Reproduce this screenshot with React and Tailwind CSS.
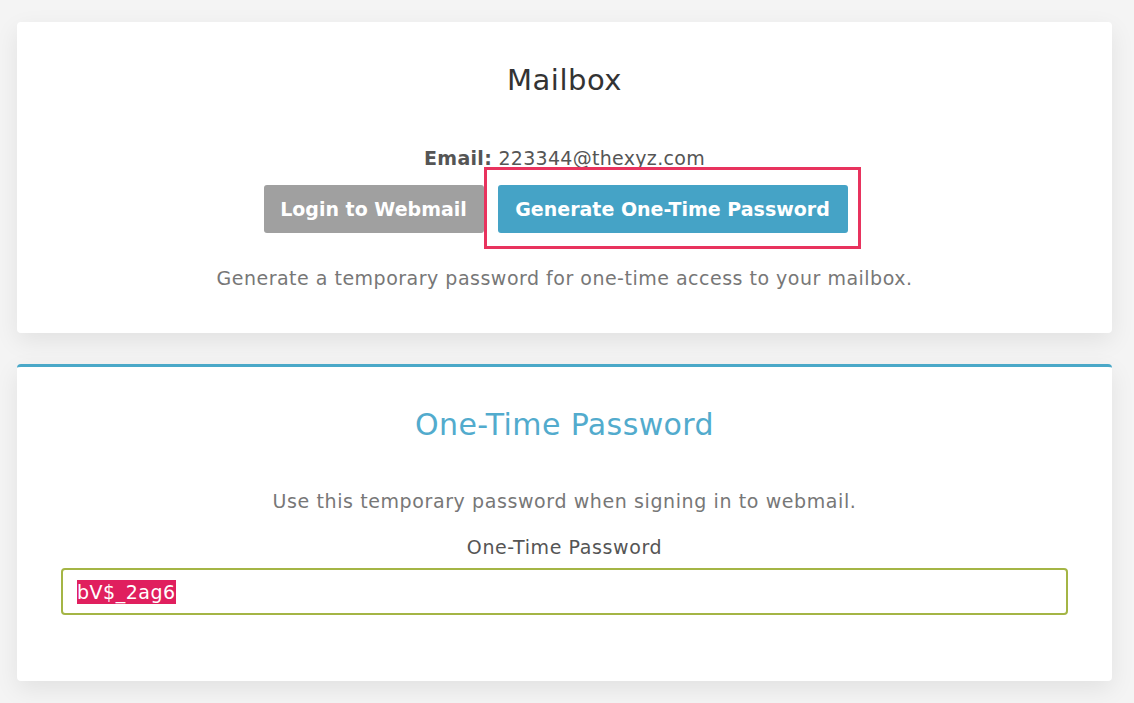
import React from 'react';

export default function App() {
  return (
    <div
      className="min-h-screen w-full bg-[#f4f4f4] pt-[22px] pb-[22px]"
      style={{ fontFamily: '"DejaVu Sans", Inter, sans-serif' }}
    >
      {/* Mailbox card */}
      <div className="ml-[17px] w-[1095px] h-[311px] bg-white rounded-[4px] shadow-[0_8px_24px_rgba(0,0,0,0.08)] flex flex-col items-center">
        <h2 className="mt-[42px] text-[29px] leading-[32px] tracking-[0.5px] text-[#333] font-normal">Mailbox</h2>
        <p className="mt-[51px] text-[19px] leading-[22px] tracking-[0.3px] text-[#555]">
          <span className="font-bold">Email:</span> 223344@thexyz.com
        </p>
        <div className="mt-[16px] mr-[18px] flex items-center">
          <button className="h-[48px] w-[220px] bg-[#a0a0a0] rounded-[3px] text-white font-bold text-[19px]">
            Login to Webmail
          </button>
          <div className="relative ml-[14px]">
            <button className="h-[48px] w-[350px] bg-[#45a3c6] rounded-[3px] text-white font-bold text-[19px]">
              Generate One-Time Password
            </button>
            <div className="absolute left-[-14px] top-[-18px] right-[-13px] bottom-[-16px] border-[3px] border-[#e8335e] pointer-events-none" />
          </div>
        </div>
        <p className="mt-[34px] text-[19px] leading-[22px] tracking-[0.5px] text-[#777]">
          Generate a temporary password for one-time access to your mailbox.
        </p>
      </div>

      {/* One-Time Password card */}
      <div className="mt-[31px] ml-[17px] w-[1095px] h-[317px] bg-white border-t-[3px] border-[#4aa8c8] rounded-[4px] shadow-[0_8px_24px_rgba(0,0,0,0.08)] flex flex-col items-center">
        <h2 className="mt-[41px] text-[30px] leading-[34px] tracking-[0.4px] text-[#52abcd] font-normal">One-Time Password</h2>
        <p className="mt-[48px] text-[19px] leading-[22px] tracking-[0.6px] text-[#777]">
          Use this temporary password when signing in to webmail.
        </p>
        <p className="mt-[24px] text-[19px] leading-[22px] tracking-[0.6px] text-[#555]">One-Time Password</p>
        <div className="mt-[10px] self-start ml-[44px] w-[1007px] h-[47px] border-2 border-[#a4b545] rounded-[4px] flex items-center pl-[14px]">
          <span className="bg-[#e01f5e] text-white text-[19px] leading-[24px] tracking-[0.5px]">bV$_2ag6</span>
        </div>
      </div>
    </div>
  );
}
